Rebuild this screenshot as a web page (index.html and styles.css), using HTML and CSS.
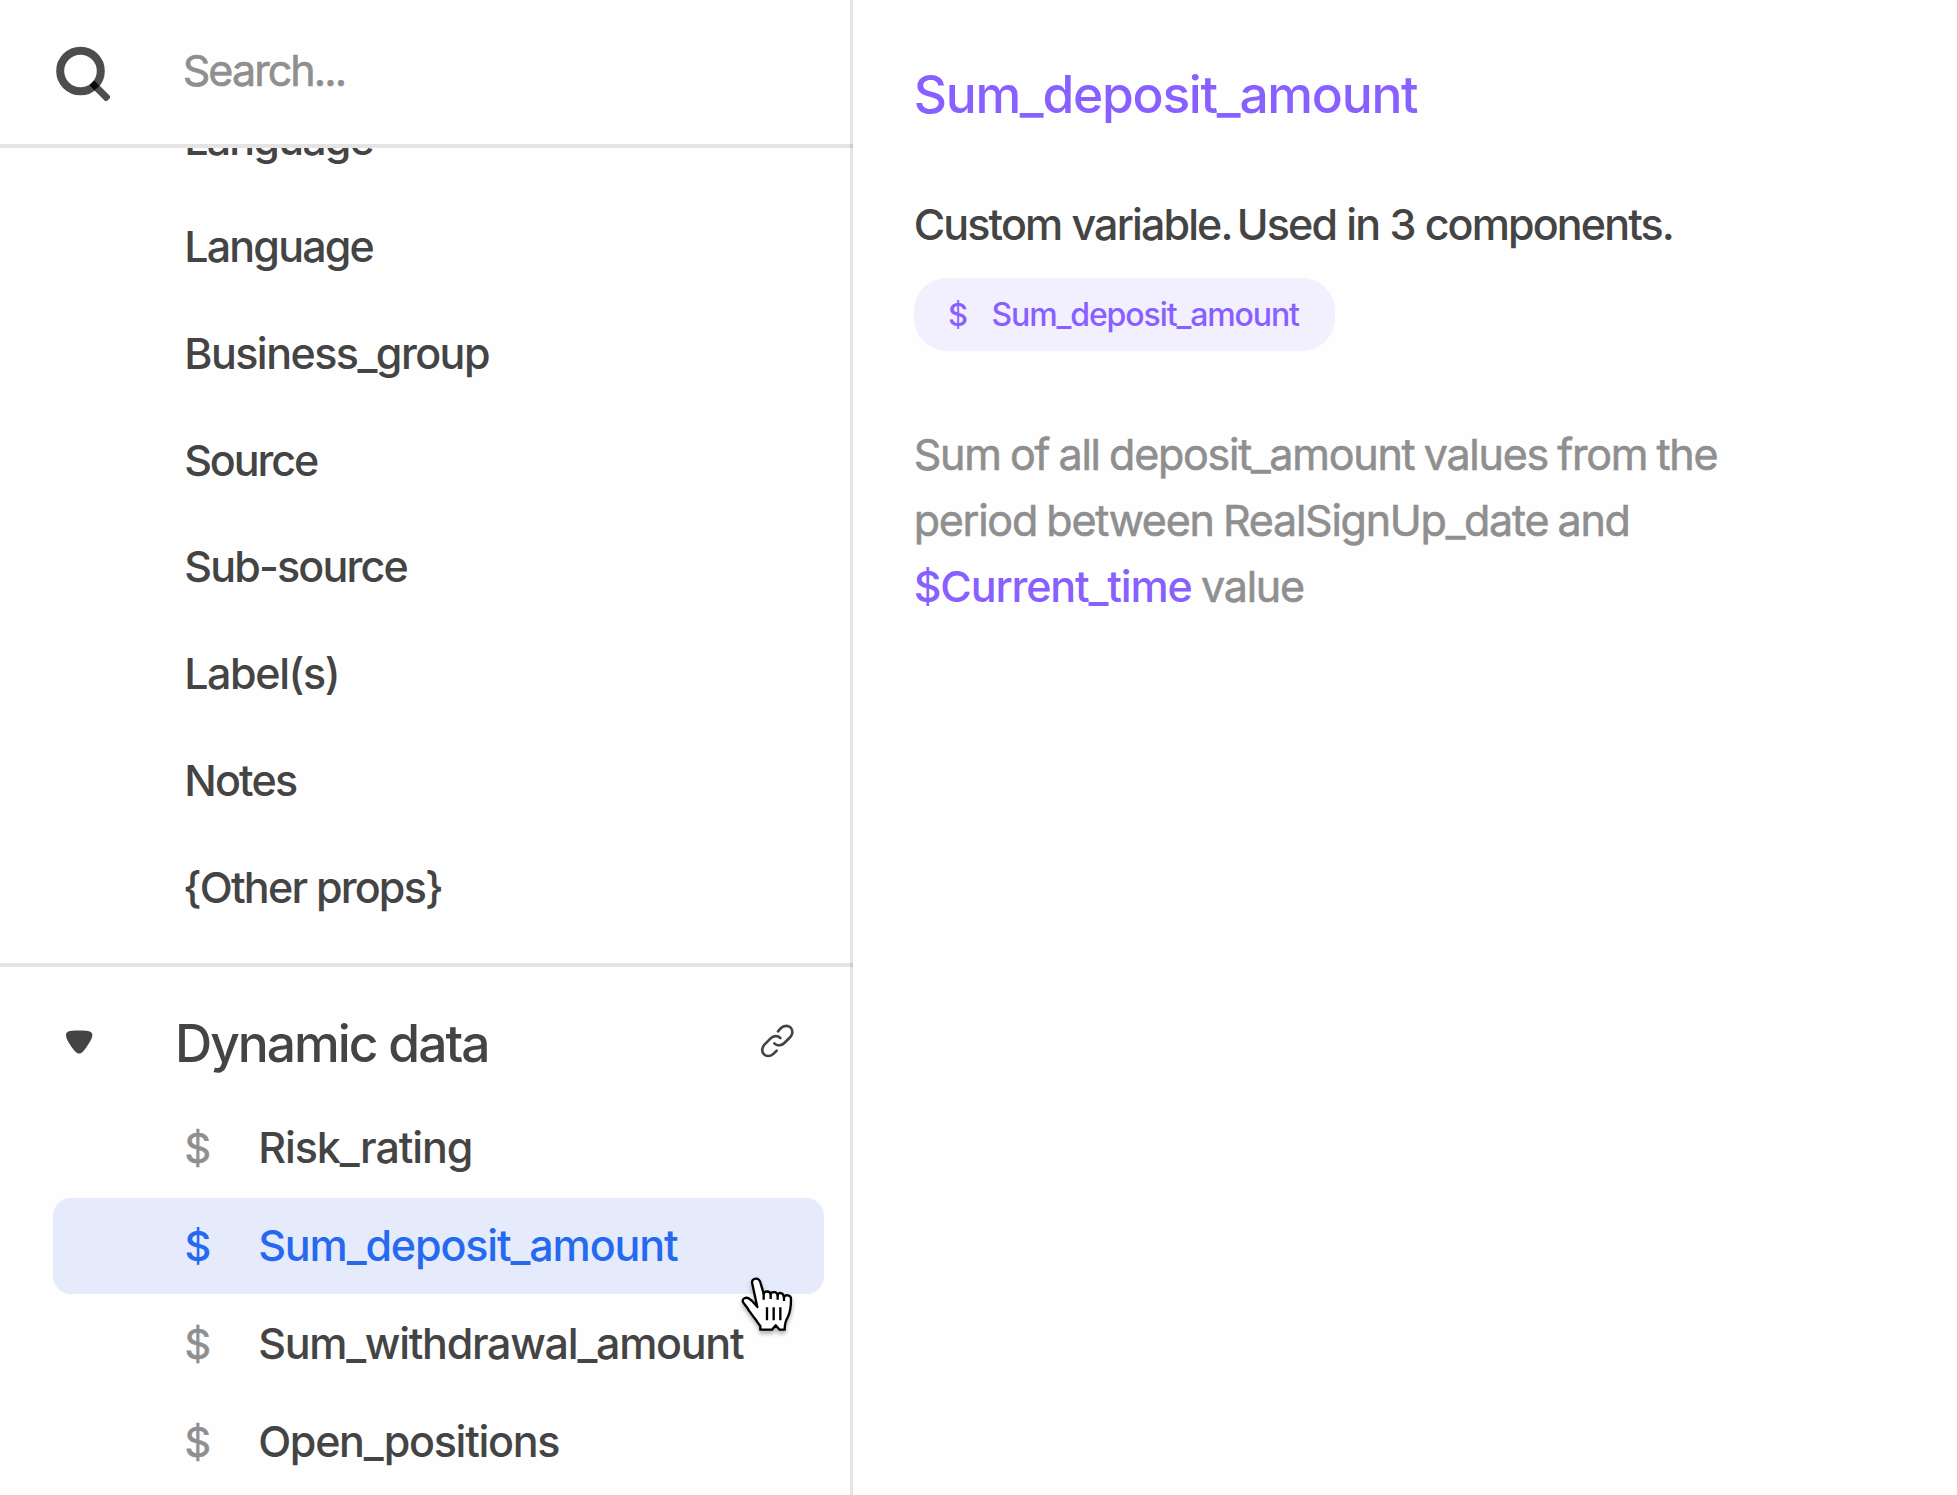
FILE: index.html
```
<!DOCTYPE html>
<html lang="en">
<head>
<meta charset="utf-8">
<title>Variables</title>
<link rel="stylesheet" href="styles.css">
</head>
<body>
<div class="app">
  <aside class="sidebar">
    <label class="search">
      <svg class="search-icon" width="60" height="60" viewBox="50 41 60 60" fill="none" stroke="#4d4d4d">
        <circle cx="80.5" cy="71" r="20.3" stroke-width="8"/>
        <path d="M92 83 108.500 99.500" stroke-width="7"/>
        <path d="M91.8 82.8 97 88" stroke="#080808" stroke-width="6.6"/>
      </svg>
      <span class="search-text">Search...</span>
    </label>
    <div class="props">
      <ul class="prop-list">
        <li class="ls-wide">Language</li>
        <li class="ls-wide">Language</li>
        <li class="ls-mid">Business_group</li>
        <li class="ls-tight">Source</li>
        <li class="ls-wide">Sub-source</li>
        <li class="ls-loose">Label(s)</li>
        <li class="ls-wide">Notes</li>
        <li class="ls-brace">{Other props}</li>
      </ul>
    </div>
    <section class="dynamic">
      <header class="group-head">
        <svg class="caret" width="28" height="24" viewBox="0 0 28 24"><path fill="#444" d="M1 5C1 2 3 .6 14 .6S27.300 2 27.300 5C27.300 8 25 12 20.500 18.500C17.500 22.500 16 23.600 14.200 23.600S10.700 22.500 7.700 18.500C3 12 1 8 1 5Z"/></svg>
        <h2 class="group-title">Dynamic data</h2>
        <svg class="link-icon" width="36" height="36" viewBox="27 24 108 108" fill="none" stroke="#444" stroke-width="8" stroke-linecap="round">
          <path d="M84 49 93 39C102 30 115 31 122 38C129 45 129 58 121 66L103 84C95 92 82 94 73 85"/>
          <path d="M91 69C83 61 70 62 62 70L44 88C35 97 34 110 42 118C49 125 62 125 71 116L80 107"/>
        </svg>
      </header>
      <ul class="var-list">
        <li class="var"><span class="sigil">$</span><span class="ls-risk">Risk_rating</span></li>
        <li class="var selected"><span class="sigil">$</span><span class="ls-sum">Sum_deposit_amount</span></li>
        <li class="var"><span class="sigil">$</span><span class="ls-open">Sum_withdrawal_amount</span></li>
        <li class="var"><span class="sigil">$</span><span class="ls-open">Open_positions</span></li>
      </ul>
    </section>
  </aside>
  <main class="detail">
    <h1 class="title">Sum_deposit_amount</h1>
    <p class="usage">Custom <span class="stop">variable. </span>Used in 3 components.</p>
    <div class="pill"><span class="pill-sigil">$</span><span>Sum_deposit_amount</span></div>
    <p class="desc">Sum of all deposit_amount values from the<br>period between RealSignUp_date and<br><a class="ref">$Current_time</a> value</p>
  </main>
</div>
<svg class="cursor" width="80" height="80" viewBox="0 0 240 240">
  <path fill="#fff" stroke="#000" stroke-width="7" stroke-linejoin="round" d="M52 57C49 46 55 41 63 41S75 46 77 55L86 86C88 78 105 76 107 88C109 79 126 79 128 91C130 80 145 82 147 96C150 88 168 89 168 102C168 130 166 142 158 157C151 168 149 178 149 194H134L122 181L111 194H76V183C69 175 65 167 59 160L42 137C37 126 28 119 24 111C20 100 33 95 43 101C54 108 60 118 67 126Z"/>
  <path fill="none" stroke="#000" stroke-width="7" d="M86 84V104M107 88V102M128 90V104M147 94V108M96 127V166M116 127V166M136 127V166"/>
</svg>
</body>
</html>
```
FILE: styles.css
```
* { box-sizing: border-box; margin: 0; padding: 0; }
body {
  width: 1957px;
  height: 1495px;
  overflow: hidden;
  background: #fefefe;
  color: #444;
  font: 500 43px/1.2 Inter, "Liberation Sans", sans-serif;
}
ul { list-style: none; }
.app { display: flex; height: 1495px; }

.sidebar {
  width: 853px;
  flex: none;
  display: flex;
  flex-direction: column;
  background: linear-gradient(#e4e4e4, #e4e4e4) right / 3px 100% no-repeat;
}
.search {
  height: 148px;
  flex: none;
  display: flex;
  align-items: center;
  padding: 0 0 3px 50px;
  border-bottom: 4px solid rgba(0, 0, 0, .1);
}
.search-icon { margin-top: 1px; }
.search-text {
  margin-left: 72.700px;
  color: #8f8f8f;
  font-weight: 400;
  letter-spacing: -1.920px;
}
.search-text, .sigil, .desc { -webkit-text-stroke: .6px currentColor; }

.props {
  height: 819px;
  flex: none;
  overflow: hidden;
  border-bottom: 4px solid rgba(0, 0, 0, .1);
}
.prop-list { margin-top: -61.800px; padding-left: 184.200px; }
.prop-list li { height: 106.800px; line-height: 106.800px; }
.ls-wide { letter-spacing: -1.820px; }
.ls-mid { letter-spacing: -1.540px; }
.ls-tight { letter-spacing: -2.100px; }
.ls-loose { letter-spacing: -1.400px; }
.ls-brace { letter-spacing: -1.800px; margin-left: -1.500px; }
.ls-risk { letter-spacing: -1.080px; }
.ls-sum { letter-spacing: -1.130px; }
.ls-open { letter-spacing: -1.290px; }

.group-head {
  height: 133px;
  display: flex;
  align-items: center;
  padding: 20px 58px 0 65px;
}
.caret { margin-top: -4px; }
.group-title {
  margin-left: 82px;
  font-size: 51.500px;
  font-weight: 500;
  letter-spacing: -1.980px;
}
.link-icon { margin: -5px 0 0 auto; }

.var-list { display: flex; flex-direction: column; gap: 2px; padding: 0 29px 0 53px; }
.var {
  height: 96px;
  display: flex;
  align-items: center;
  padding-left: 131.500px;
  border-radius: 18px;
}
.sigil { width: 73.700px; padding-top: 1px; color: #8f8f8f; font-size: 41.500px; font-weight: 400; }
.selected, .selected .sigil { color: #2569f1; }
.selected .sigil { font-weight: 500; -webkit-text-stroke: 0; }
.selected { background: #e5ebfb; }

.detail { flex: 1; padding: 62.500px 0 0 60.700px; }
.title {
  color: #8860ff;
  font-size: 51.500px;
  font-weight: 500;
  line-height: 62px;
  letter-spacing: -1.270px;
}
.usage { margin-top: 73px; line-height: 52px; letter-spacing: -1.880px; word-spacing: .600px; }
.stop { word-spacing: -4px; }
.pill {
  display: flex;
  align-items: center;
  width: 421px;
  height: 73.500px;
  margin: 28px 0 0 .800px;
  padding: 1px 0 0 33.500px;
  border-radius: 33px;
  background: #f2efff;
  color: #8860ff;
  font-size: 32px;
  letter-spacing: -1.100px;
}
.pill-sigil { width: 43.500px; font-size: 31px; }
.desc {
  margin-top: 70px;
  color: #8f8f8f;
  font-weight: 400;
  line-height: 66px;
  letter-spacing: -1.250px;
  word-spacing: -1.500px;
}
.ref { color: #8860ff; font-weight: 500; letter-spacing: -1.130px; -webkit-text-stroke: 0; }

.cursor {
  position: absolute;
  left: 735px;
  top: 1265px;
  filter: drop-shadow(0 3px 2px rgba(0, 0, 0, .3));
}
```
